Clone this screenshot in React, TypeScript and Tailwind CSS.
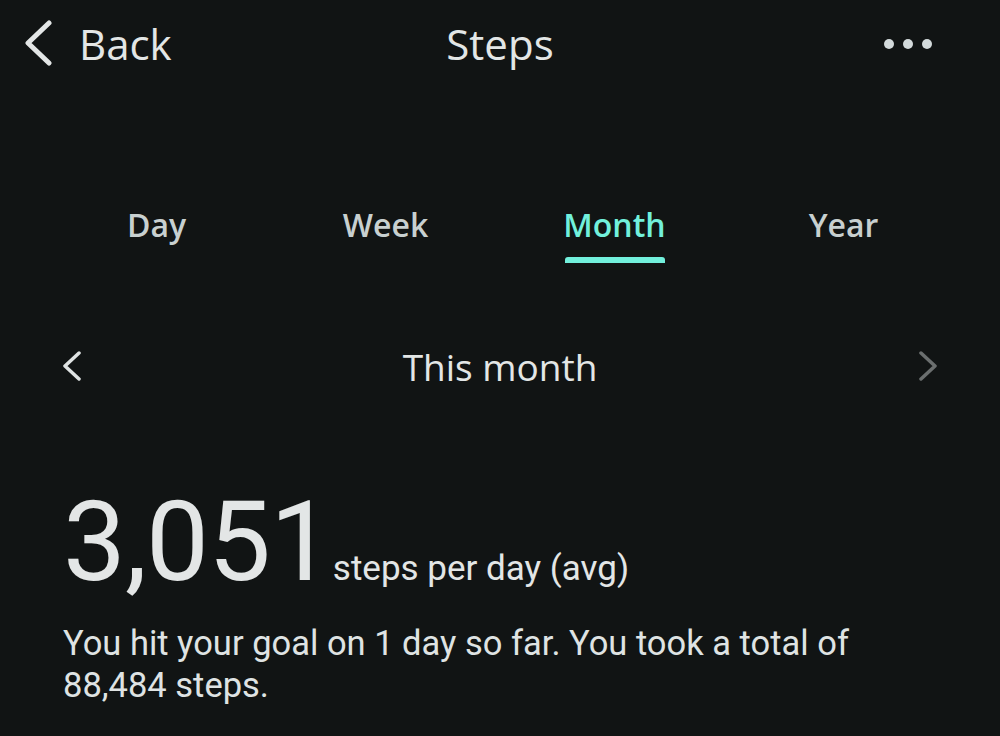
import React from 'react';

const tabs = ['Day', 'Week', 'Month', 'Year'];

const App: React.FC = () => {
  const active = 'Month';

  return (
    <div className="w-[1000px] h-[736px] overflow-hidden bg-[#111414] text-[#e3e6e6]">
      {/* header */}
      <div className="grid grid-cols-[1fr_auto_1fr] items-center h-[88px] px-[25px] font-['Open_Sans',sans-serif]">
        <div className="flex items-center">
          <svg width="28" height="48" viewBox="0 0 28 48">
            <path d="M24 3 L3 23 L24 43" fill="none" stroke="#e3e6e6" strokeWidth="5" strokeLinecap="round" strokeLinejoin="round" />
          </svg>
          <span className="ml-[26px] text-[42px] leading-none">Back</span>
        </div>
        <div className="text-[42px] leading-none">Steps</div>
        <div className="flex justify-end items-center gap-[9px] mr-[43px]">
          <span className="w-[10px] h-[10px] rounded-full bg-[#d3dadb]" />
          <span className="w-[10px] h-[10px] rounded-full bg-[#d3dadb]" />
          <span className="w-[10px] h-[10px] rounded-full bg-[#d3dadb]" />
        </div>
      </div>

      {/* range tabs */}
      <div className="grid grid-cols-4 mx-[42px] mt-[117px] font-['Open_Sans',sans-serif]">
        {tabs.map((t) => (
          <div key={t} className="flex flex-col items-center">
            <span className={`text-[32px] leading-[40px] font-semibold ${t === active ? 'text-[#72f0dc]' : 'text-[#c8d0d0]'}`}>{t}</span>
            <span className={`mt-[12px] w-[100px] h-[6px] rounded-t-[3px] ${t === active ? 'bg-[#72f0dc]' : 'bg-transparent'}`} />
          </div>
        ))}
      </div>

      {/* period selector */}
      <div className="flex items-center justify-between h-[48px] mt-[79px] px-[63px] font-['Open_Sans',sans-serif]">
        <svg width="19" height="30" viewBox="0 0 19 30">
          <path d="M16 2 L2 15 L16 28" fill="none" stroke="#dfe3e3" strokeWidth="3.5" strokeLinecap="round" strokeLinejoin="round" />
        </svg>
        <span className="text-[37px] leading-none font-medium">This month</span>
        <svg width="19" height="30" viewBox="0 0 19 30">
          <path d="M3 2 L17 15 L3 28" fill="none" stroke="#6b6f6f" strokeWidth="3.5" strokeLinecap="round" strokeLinejoin="round" />
        </svg>
      </div>

      {/* average */}
      <div className="flex items-baseline mt-[96px] pl-[63px] font-['Roboto',sans-serif]">
        <span className="text-[112px] leading-none tracking-[-1px]">3,051</span>
        <span className="ml-[1px] text-[35px] leading-none">steps per day (avg)</span>
      </div>

      <p className="mt-[24px] pl-[63px] pr-[100px] text-[34.5px] leading-[42px] text-[#dfe3e3] font-['Roboto',sans-serif]">
        You hit your goal on 1 day so far. You took a total of 88,484 steps.
      </p>
    </div>
  );
};

export default App;
